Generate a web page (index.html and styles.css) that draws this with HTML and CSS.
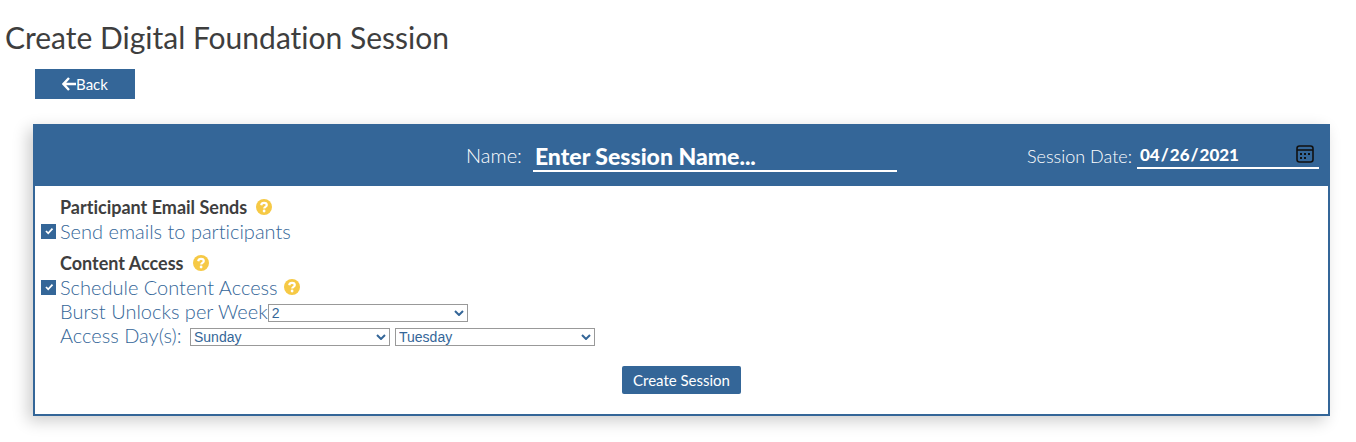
FILE: index.html
```html
<!DOCTYPE html>
<html lang="en-US">
<head>
<meta charset="utf-8">
<title>Create Digital Foundation Session</title>
<link rel="stylesheet" href="styles.css">
</head>
<body>
<svg class="sprite" aria-hidden="true">
  <symbol id="help" viewBox="0 0 16 16">
    <circle cx="8" cy="8" r="8" fill="#f6c945"/>
    <path d="M5.200 6.200C5.500 4.500 6.600 3.800 8 3.800c1.600 0 2.800.9 2.800 2.300 0 1.900-2.600 1.700-2.600 3.400" fill="none" stroke="#fff" stroke-width="2.200"/>
    <circle cx="8.100" cy="12" r="1.400" fill="#fff"/>
  </symbol>
</svg>
<main class="page">
  <h1 class="title">Create Digital Foundation Session</h1>
  <button type="button" class="back">
    <svg class="back-icon" viewBox="0 0 14 14" aria-hidden="true"><path d="M7 1 1.500 7 7 13M2 7h12" fill="none" stroke="#fff" stroke-width="2.400"/></svg>Back
  </button>
  <form class="panel">
    <header class="panel-head">
      <div class="name-field">
        <label for="name">Name:</label>
        <input id="name" class="name-input" type="text" placeholder="Enter Session Name...">
      </div>
      <div class="date-field">
        <label for="date">Session Date:</label>
        <input id="date" class="date-input" type="date" value="2021-04-26">
      </div>
    </header>
    <div class="panel-body">
      <h2 class="heading">Participant Email Sends <svg class="help"><use href="#help"/></svg></h2>
      <div class="row">
        <input id="send" class="check" type="checkbox" checked>
        <label for="send">Send emails to participants</label>
      </div>
      <h2 class="heading heading-next">Content Access <svg class="help"><use href="#help"/></svg></h2>
      <div class="row">
        <input id="schedule" class="check" type="checkbox" checked>
        <label for="schedule">Schedule Content Access</label>
        <svg class="help"><use href="#help"/></svg>
      </div>
      <div class="row indented">
        <label for="bursts">Burst Unlocks per Week</label>
        <select id="bursts" class="select"><option>1</option><option selected>2</option><option>3</option></select>
      </div>
      <div class="row indented">
        <label for="day1" class="days-label">Access Day(s):</label>
        <div class="days">
          <select id="day1" class="select"><option>Sunday</option><option>Monday</option></select>
          <select class="select" aria-label="Second access day"><option>Tuesday</option><option>Wednesday</option></select>
        </div>
      </div>
      <button type="submit" class="create">Create Session</button>
    </div>
  </form>
</main>
</body>
</html>
```
FILE: styles.css
```css
* { box-sizing: border-box; }
body {
  margin: 0;
  background: #fff;
  color: #3e3e3e;
  font-family: Lato, "Open Sans", sans-serif;
  font-variant-ligatures: none;
}
.sprite { display: none; }
.page {
  display: flex;
  flex-direction: column;
  align-items: flex-start;
  padding: 17px 26px 24px 5px;
}
.title {
  margin: 0 0 12px;
  font-size: 30px;
  line-height: 40px;
  font-weight: 400;
}
input, select, button { font-family: inherit; border-radius: 0; }
.back {
  display: flex;
  align-items: center;
  justify-content: center;
  width: 100px;
  height: 30px;
  margin: 0 0 25px 30px;
  padding: 0;
  border: 0;
  background: #346698;
  color: #fff;
  font-size: 15px;
}
.back-icon { width: 14px; height: 14px; }
.panel {
  align-self: stretch;
  margin-left: 28px;
  border: 2px solid #346698;
  box-shadow: -5px 5px 15px rgba(0, 0, 0, .2);
}
.panel-head {
  display: grid;
  grid-template-columns: 1fr auto 1fr;
  align-items: start;
  height: 60px;
  padding: 13px 9px 0;
  background: #346698;
  color: #fff;
}
.name-field {
  grid-column: 2;
  display: flex;
  gap: 11px;
  font-size: 20px;
  line-height: 32px;
  font-weight: 300;
}
.date-field {
  justify-self: end;
  display: flex;
  gap: 5px;
  font-size: 18px;
  line-height: 35px;
  font-weight: 300;
}
.name-input, .date-input {
  padding: 2px 2px 0;
  border: 0;
  border-bottom: 2px solid #fff;
  background: transparent;
  color: #fff;
  outline: 0;
}
.name-input {
  width: 364px;
  height: 33px;
  font-size: 23px;
  font-weight: 900;
}
.name-input::placeholder { color: #fff; opacity: 1; }
.date-input {
  width: 182px;
  height: 30px;
  font-size: 17px;
  font-weight: 900;
}
.date-input::-webkit-calendar-picker-indicator {
  width: 20px;
  height: 20px;
  padding: 0;
  margin-right: 2px;
  background: url("data:image/svg+xml,%3Csvg xmlns='http://www.w3.org/2000/svg' viewBox='0 0 20 20'%3E%3Crect x='2' y='2' width='16' height='16' rx='2.500' fill='none' stroke='%23111' stroke-width='1.600'/%3E%3Cpath d='M2 6h16' stroke='%23111' stroke-width='1.600'/%3E%3Cpath d='M5 9h2v2H5zM9 9h2v2H9zM13 9h2v2h-2zM5 13h2v2H5zM9 13h2v2H9z' fill='%23111'/%3E%3C/svg%3E") center / 20px no-repeat;
}
.panel-body {
  display: flex;
  flex-direction: column;
  padding: 9px 6px 20px;
}
.heading {
  display: flex;
  align-items: center;
  gap: 9px;
  margin: 0 0 0 19px;
  font-size: 18px;
  line-height: 24px;
  font-weight: 700;
}
.heading-next { margin-top: 8px; }
.help { width: 16px; height: 16px; }
.row {
  display: flex;
  align-items: center;
  gap: 4px;
  color: #346698;
  font-size: 20px;
  line-height: 24px;
  font-weight: 300;
}
.row .help { margin-left: 2px; }
.indented { margin-left: 19px; gap: 0; }
.check {
  appearance: none;
  width: 15px;
  height: 15px;
  margin: 0;
  background: #346698 url("data:image/svg+xml,%3Csvg xmlns='http://www.w3.org/2000/svg' viewBox='0 0 14 14'%3E%3Cpath d='M4 7l2.200 2.300L10.500 4.700' fill='none' stroke='%23fff' stroke-width='1.800'/%3E%3C/svg%3E") center / 14px no-repeat;
}
.days-label { min-width: 130px; }
.days { display: flex; gap: 5px; }
.select {
  appearance: none;
  width: 200px;
  height: 18px;
  margin-top: 4px;
  padding: 0 20px 0 3px;
  border: 1px solid #999;
  color: #346698;
  font-family: "Liberation Sans", Arial, sans-serif;
  font-size: 14px;
  line-height: 16px;
  background: #fff url("data:image/svg+xml,%3Csvg xmlns='http://www.w3.org/2000/svg' viewBox='0 0 10 6'%3E%3Cpath d='M1 1l4 4 4-4' fill='none' stroke='%23346698' stroke-width='2'/%3E%3C/svg%3E") right 3px center / 10px 6px no-repeat;
}
.create {
  align-self: center;
  height: 28px;
  margin-top: 19px;
  padding: 0 11px;
  border: 0;
  border-radius: 2px;
  background: #346698;
  color: #fff;
  font-size: 15px;
}
```
